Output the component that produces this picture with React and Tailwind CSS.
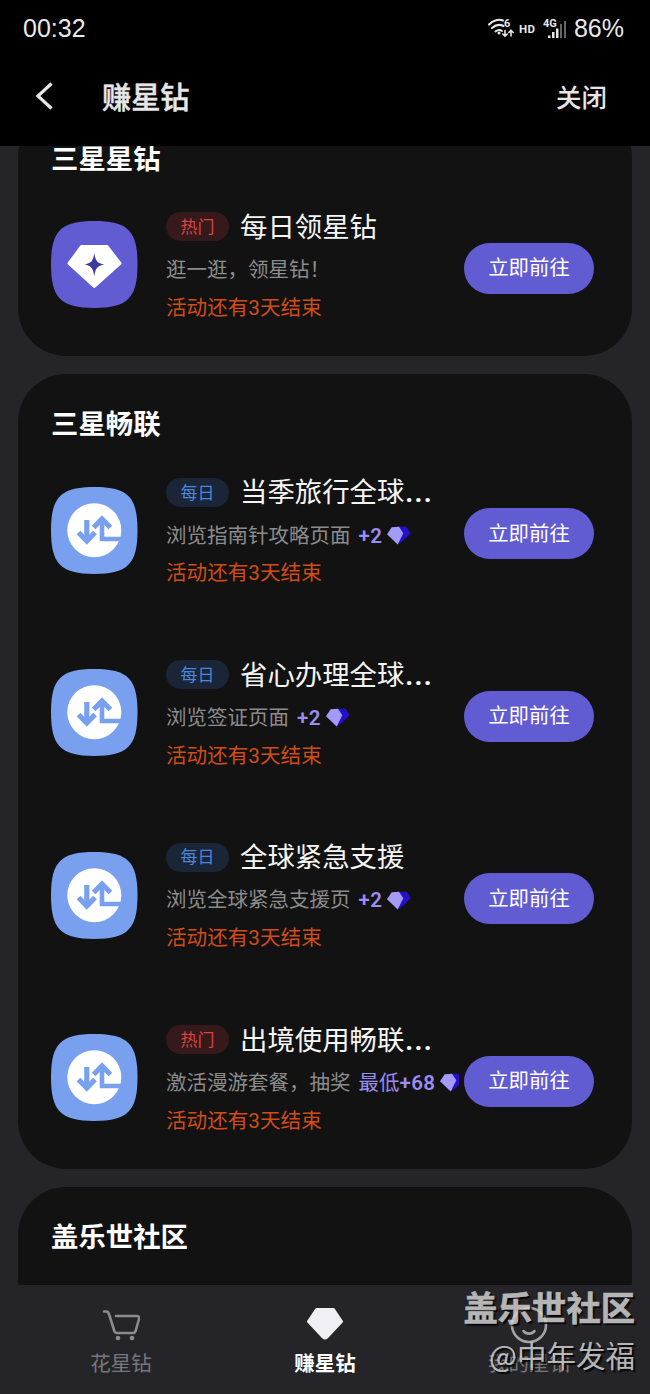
const sections = [
  {
    name: "三星星钻",
    tasks: [{ icon: "diamond", tag: "热门", title: "每日领星钻", desc: "逛一逛，领星钻！" }],
  },
  {
    name: "三星畅联",
    tasks: [
      { tag: "每日", title: "当季旅行全球", cut: true, desc: "浏览指南针攻略页面", reward: "+2" },
      { tag: "每日", title: "省心办理全球", cut: true, desc: "浏览签证页面", reward: "+2" },
      { tag: "每日", title: "全球紧急支援", desc: "浏览全球紧急支援页", reward: "+2" },
      { tag: "热门", title: "出境使用畅联", cut: true, desc: "激活漫游套餐，抽奖", prefix: "最低", reward: "+68" },
    ],
  },
  { name: "盖乐世社区", tasks: [] },
];

const SQUIRCLE =
  "M43.300 0C77 0 86.500 10 86.500 43.300S77 87 43.300 87S0 77 0 43.300S10 0 43.300 0Z";

function DiamondIcon() {
  return (
    <svg width="87" height="87" viewBox="0 0 87 87" className="shrink-0">
      <path d={SQUIRCLE} fill="#625cd3" />
      <path
        d="M30.500 25.500H56L69 42.500L43.300 65.500L18 42.500Z"
        fill="#fff"
        stroke="#fff"
        strokeWidth="3"
        strokeLinejoin="round"
      />
      <path d="M43.300 32C44.500 40 46 42 53.500 43.500C46 45 44.500 47 43.300 55.500C42 47 40.500 45 33.500 43.500C40.500 42 42 40 43.300 32Z" fill="#3f3aa0" />
    </svg>
  );
}

function RoamingIcon() {
  return (
    <svg width="87" height="87" viewBox="0 0 87 87" className="shrink-0">
      <path d={SQUIRCLE} fill="#78a0ee" />
      <circle cx="43.300" cy="43.200" r="27" fill="#fff" />
      <g fill="none" stroke="#78a0ee">
        <path d="M35.800 33V53" strokeWidth="5.200" />
        <path d="M27.500 45.500L35.800 54L44 45.500" strokeWidth="5.200" />
        <path d="M51 33V52H72" strokeWidth="4.600" />
        <path d="M42.600 40.500L51 32L59.400 40.500" strokeWidth="5.200" />
      </g>
    </svg>
  );
}

function Gem() {
  return (
    <svg width="26" height="20" viewBox="0 0 26 20" className="ml-[4px] shrink-0">
      <path d="M12 0.700H20.700L24.700 7.300L17.300 14.500L11.700 18.500Z" fill="#2410c8" />
      <path d="M5.700 1.300L13 0.700L17.300 7.300L11.700 18.500L1 8.300Z" fill="#a49af8" />
    </svg>
  );
}

function Tag({ label }) {
  const color =
    label === "热门" ? "bg-[#361a1b] text-[#da4340]" : "bg-[#1a2538] text-[#4d86dc]";
  return (
    <span className={`flex h-[29px] w-[63px] shrink-0 items-center justify-center rounded-full pt-[2px] text-[17px] ${color}`}>
      {label}
    </span>
  );
}

function Task({ task }) {
  return (
    <div className="flex h-[182.4px] items-center pr-[38px] pl-[33px]">
      {task.icon === "diamond" ? <DiamondIcon /> : <RoamingIcon />}
      <div className="mr-[5px] ml-[28px] w-[293px] shrink-0 overflow-hidden whitespace-nowrap">
        <div className="flex h-[42px] items-center">
          <Tag label={task.tag} />
          <h3 className="ml-[11px] pt-[3px] text-[27.4px] text-[#f5f5f5]">
            {task.title}
            {task.cut && <span className="ml-[1px] font-bold tracking-[1.2px]">...</span>}
          </h3>
        </div>
        <div className="flex h-[42px] items-center pt-[3px] text-[20.5px] text-[#8c8c8c]">
          {task.desc}
          {task.reward && (
            <span className="ml-[8px] flex items-center text-[#9b8cf2]">
              {task.prefix}
              <b className="font-semibold tracking-[0.4px]">{task.reward}</b>
              <Gem />
            </span>
          )}
        </div>
        <p className="h-[34px] pt-[1px] text-[20.6px] leading-[34px] text-[#d14c17]">活动还有3天结束</p>
      </div>
      <button className="mt-[7px] h-[51px] w-[130px] shrink-0 rounded-full bg-[#625cd3] pt-[1px] text-[20.4px] text-white">
        立即前往
      </button>
    </div>
  );
}

function StatusBar() {
  return (
    <div className="flex h-[56px] items-center justify-between pt-[2px] pr-[26px] pl-[23px] font-['Liberation_Sans',sans-serif] text-[25px] text-[#e8e8e8]">
      <span>00:32</span>
      <div className="flex items-center">
        <svg width="82" height="24" viewBox="0 0 82 24" className="mr-[5px] mb-[2px]">
          <g fill="none" stroke="#e8e8e8" strokeWidth="2" strokeLinecap="round">
            <path d="M2 8.500C6 4 12 2.800 16 4.500M5 12C9 8.500 13 8.200 16.500 10M8.500 15.500C11 13.500 13.500 13.800 15 15" />
            <path d="M18 14.500V20M15.800 18L18 20.200L20.200 18M24 20V14.500M21.800 16.500L24 14.300L26.200 16.500" strokeWidth="1.600" />
          </g>
          <circle cx="12" cy="17" r="1.500" fill="#e8e8e8" />
          <g fill="#e8e8e8" fontFamily="Roboto, sans-serif" fontWeight="700">
            <text x="17" y="11" fontSize="11">6</text>
            <text x="32" y="16.500" fontSize="11.500" textLength="16">HD</text>
            <text x="56" y="11" fontSize="11">4G</text>
          </g>
          <path d="M61 19.500h2.500v2.500H61zM65 16h2.500v6H65zM69 12.500h2.500V22H69z" fill="#e8e8e8" />
          <path d="M73 8h2v14h-2zM77 5h2v17h-2z" fill="#666" />
        </svg>
        <span>86%</span>
      </div>
    </div>
  );
}

function NavItem({ label, active, children }) {
  return (
    <div className={`flex w-[204px] flex-col items-center pt-[20px] text-[20.5px] ${active ? "font-bold text-white" : "text-[#77777b]"}`}>
      <div className="flex h-[40px] items-center">{children}</div>
      <span className="leading-[38px]">{label}</span>
    </div>
  );
}

export default function App() {
  return (
    <div className="relative flex h-[1394px] w-[650px] flex-col overflow-hidden bg-[#252529] font-[Roboto,'Noto_Sans_CJK_SC',sans-serif]">
      <header className="h-[146px] shrink-0 bg-black text-[#e6e6e6]">
        <StatusBar />
        <div className="flex h-[82px] items-center pr-[43px] pl-[35px] font-medium">
          <svg width="20" height="30" viewBox="0 0 20 30" className="mb-[3px]">
            <path d="M16.500 2.500L3 15L16.500 27.500" fill="none" stroke="#e6e6e6" strokeWidth="3.200" />
          </svg>
          <h1 className="ml-[47px] flex-1 pt-[3px] text-[29.2px] [-webkit-text-stroke:0.5px_#e6e6e6]">赚星钻</h1>
          <button className="pt-[2px] text-[25.5px]">关闭</button>
        </div>
      </header>

      <main className="h-[1139px] shrink-0 overflow-hidden px-[18px]">
        <div className="mt-[-37.5px] flex flex-col gap-[18.300px]">
          {sections.map((s) => (
            <section key={s.name} className="min-h-[140px] rounded-[48px] bg-[#121212]">
              <h2 className="h-[65px] pt-[36px] pl-[33px] text-[27.4px] leading-[31px] font-bold text-white">
                {s.name}
              </h2>
              {s.tasks.map((t) => (
                <Task key={t.title} task={t} />
              ))}
            </section>
          ))}
        </div>
      </main>

      <nav className="flex flex-1 justify-center">
        <NavItem label="花星钻">
          <svg width="38" height="32" viewBox="0 0 38 32" fill="none" stroke="#8b8b8f" strokeWidth="2.600" strokeLinecap="round" strokeLinejoin="round" className="mr-[1px] mb-[1px]">
            <path d="M2 2.500H4.500C6 2.500 6.500 3.500 7 5L12.500 22.500C13 23.500 13.500 24 15 24H31C32.500 24 33.200 23 33.600 22L37 10C37.400 8 36.500 7 35 7H14" />
            <g fill="#8b8b8f" stroke="none">
              <circle cx="16" cy="29" r="2.300" />
              <circle cx="30" cy="29" r="2.300" />
            </g>
          </svg>
        </NavItem>
        <NavItem label="赚星钻" active>
          <svg width="38" height="34" viewBox="0 0 38 34" className="mb-[2px]">
            <path d="M10.500 2.500H27.500L35.500 14.500L21 30Q19 32 17 30L2.500 14.500Z" fill="#f0eff5" stroke="#f0eff5" strokeWidth="3" strokeLinejoin="round" />
          </svg>
        </NavItem>
        <NavItem label="我的星钻">
          <svg width="38" height="38" viewBox="0 0 38 38" fill="none" stroke="#a2a2a4" strokeWidth="2.600" strokeLinecap="round">
            <circle cx="19" cy="19" r="17" />
            <path d="M13.500 25C16 28.500 22 28.500 24.500 25" />
          </svg>
        </NavItem>
      </nav>

      <div className="absolute right-[15px] bottom-[18px] flex flex-col items-end text-[#cfcfcf] opacity-85 [text-shadow:2px_2px_1px_#000]">
        <span className="text-[34.3px] leading-[46px] font-bold [-webkit-text-stroke:0.6px_#cfcfcf]">盖乐世社区</span>
        <span className="font-['Noto_Sans_CJK_SC',sans-serif] text-[29.5px] leading-[44px]">@中年发福</span>
      </div>
    </div>
  );
}
